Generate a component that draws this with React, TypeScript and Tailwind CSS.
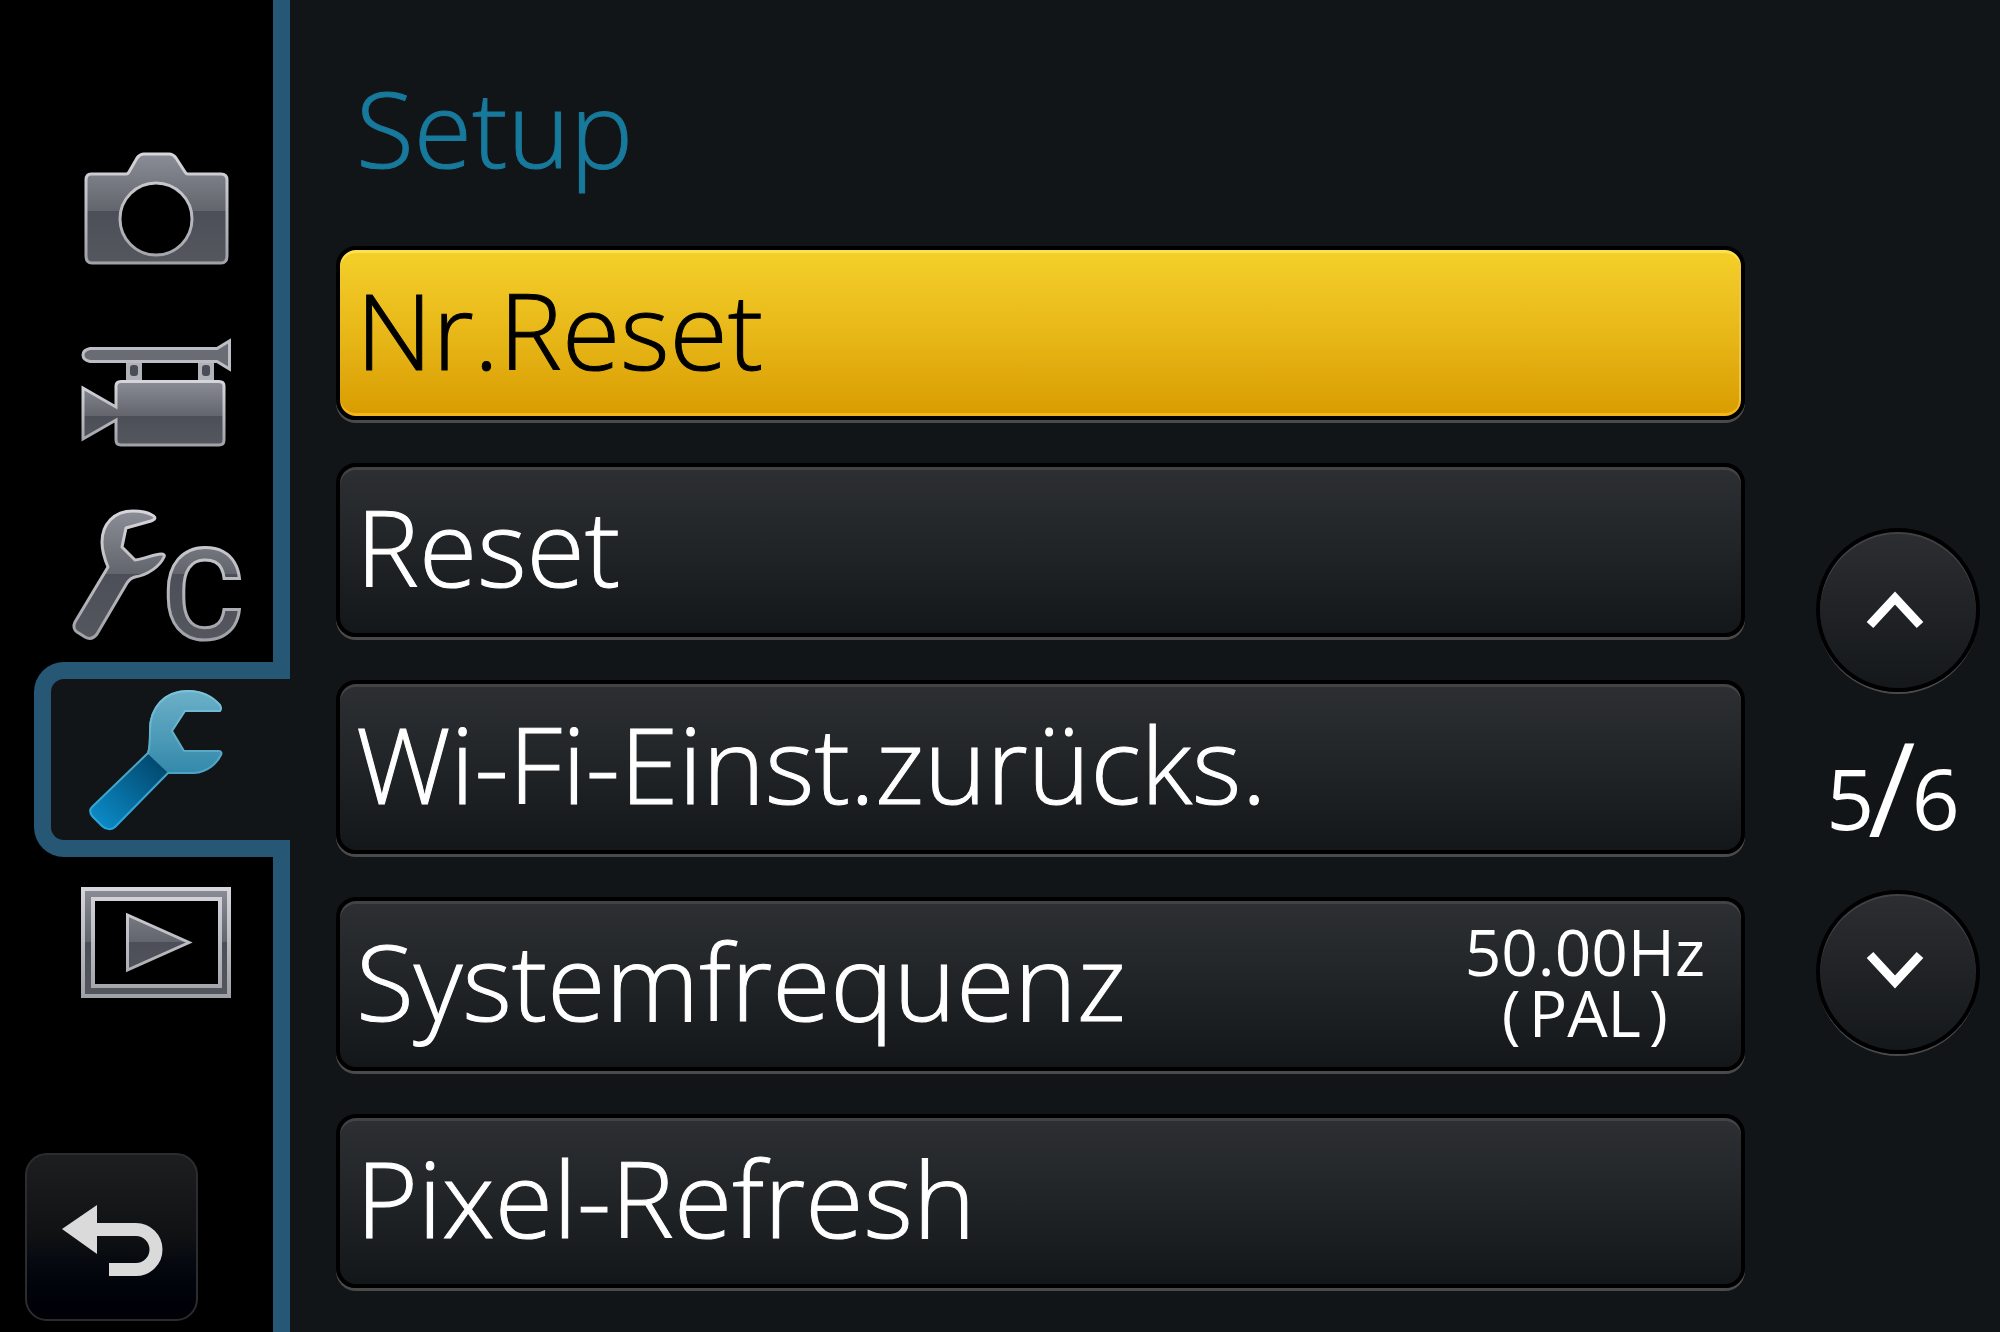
import type { ReactNode } from "react";

type Item = { label: string; value?: string; standard?: string };

const items: Item[] = [
  { label: "Nr.Reset" },
  { label: "Reset" },
  { label: "Wi-Fi-Einst.zurücks." },
  { label: "Systemfrequenz", value: "50.00Hz", standard: "PAL" },
  { label: "Pixel-Refresh" },
];

function SteelDefs({ id, top, split, bottom }: { id: string; top: number; split: number; bottom: number }) {
  const at = (split - top) / (bottom - top);
  return (
    <defs>
      <linearGradient id={`${id}-fill`} gradientUnits="userSpaceOnUse" x1="0" y1={top} x2="0" y2={bottom}>
        <stop offset="0" stopColor="#8c8e97" />
        <stop offset={at} stopColor="#63656d" />
        <stop offset={at} stopColor="#4c4f57" />
        <stop offset="1" stopColor="#54575e" />
      </linearGradient>
      <linearGradient id={`${id}-edge`} gradientUnits="userSpaceOnUse" x1="0" y1={top} x2="0" y2={bottom}>
        <stop offset="0" stopColor="#d6d6dc" />
        <stop offset="1" stopColor="#a0a1a8" />
      </linearGradient>
    </defs>
  );
}

function CameraIcon() {
  return (
    <svg className="h-[120px] w-[176px]" viewBox="72 148 176 120" aria-hidden="true">
      <SteelDefs id="cam" top={153} split={211} bottom={264} />
      <path
        fill="url(#cam-fill)"
        stroke="url(#cam-edge)"
        strokeWidth="3"
        fillRule="evenodd"
        d="M91 174H126Q128 174 129 172L137 158Q140 154 144 154H169Q173 154 176 158L185 172Q186 174 188 174H221Q227 174 227 180V256Q227 263 221 263H92Q86 263 86 256V180Q86 174 91 174ZM156 183A36 36 0 1 0 156 255A36 36 0 1 0 156 183Z"
      />
    </svg>
  );
}

function VideoIcon() {
  return (
    <svg className="h-[120px] w-[176px]" viewBox="72 333 176 120" aria-hidden="true">
      <SteelDefs id="vid" top={381} split={417} bottom={447} />
      <g fill="#b0b2ba">
        <path d="M126 364H142V384H126Z" />
        <path d="M198 364H214V384H198Z" />
      </g>
      <g fill="#4a4d55">
        <rect x="130" y="366" width="8" height="11" rx="3" />
        <rect x="202" y="366" width="8" height="11" rx="3" />
      </g>
      <path
        fill="#6a6c74"
        stroke="#bcbdc5"
        strokeWidth="3"
        d="M90 349.500H217L229.500 342V370L217 362.500H90Q83 361 83 356Q83 351 90 349.500Z"
      />
      <path
        fill="url(#vid-fill)"
        stroke="url(#vid-edge)"
        strokeWidth="3"
        d="M121 382.500H219Q224 382.500 224 387V441Q224 446 219 446H121Q116 446 116 441V421L83 440V389L116 408V387Q116 382.500 121 382.500Z"
      />
    </svg>
  );
}

function CustomIcon() {
  return (
    <svg className="h-[140px] w-[180px] overflow-visible" viewBox="72 503 180 140" aria-hidden="true">
      <SteelDefs id="wrc" top={510} split={574} bottom={640} />
      <path
        fill="url(#wrc-fill)"
        stroke="url(#wrc-edge)"
        strokeWidth="3"
        strokeLinejoin="round"
        d="M135 560L122 547L126 528L151 521C156 519 156 517 152 515C147 512 140 511 133 511C114 511 102 524 102 542C102 552 105 560 108 567L75 622C73 626 74 630 77 632L85 637C90 640 94 638 97 634L127 583C129 580 131 578 135 577C148 575 160 566 164 557C165 555 164 554 161 554C154 554 145 559 135 560Z"
      />
      <text
        x="162"
        y="639"
        fontSize="126"
        fontWeight="500"
        fontFamily="Roboto, sans-serif"
        fill="url(#wrc-fill)"
        stroke="url(#wrc-edge)"
        strokeWidth="3"
      >
        C
      </text>
    </svg>
  );
}

function SetupIcon() {
  return (
    <svg className="h-[150px] w-[176px]" viewBox="72 685 176 150" aria-hidden="true">
      <defs>
        <linearGradient id="set-head" gradientUnits="userSpaceOnUse" x1="0" y1="690" x2="0" y2="773">
          <stop offset="0" stopColor="#6cb0c8" />
          <stop offset="1" stopColor="#3489ab" />
        </linearGradient>
        <linearGradient id="set-grip" gradientUnits="userSpaceOnUse" x1="158" y1="763" x2="100" y2="822">
          <stop offset="0" stopColor="#024a70" />
          <stop offset="1" stopColor="#0b88c4" />
        </linearGradient>
        <linearGradient id="set-edge" gradientUnits="userSpaceOnUse" x1="0" y1="690" x2="0" y2="829">
          <stop offset="0" stopColor="#7cc4da" />
          <stop offset="0.550" stopColor="#4fa3c2" />
          <stop offset="1" stopColor="#25a5dc" />
        </linearGradient>
      </defs>
      <path fill="url(#set-grip)" d="M148 753L92 807C89 810 90 813 92 816L102 826C106 830 112 830 115 827L168 773Z" />
      <path
        fill="url(#set-head)"
        d="M184 751L172 731L185 711H220C222 709 221 707 220 705C212 696 202 690 188 690C164 690 149 708 149 730C149 740 149 748 147 753L168 773H194C208 772 217 763 221 755C222 753 221 751 219 751Z"
      />
      <path
        fill="none"
        stroke="url(#set-edge)"
        strokeWidth="2"
        strokeLinejoin="round"
        d="M184 751L172 731L185 711H220C222 709 221 707 220 705C212 696 202 691 188 691C164 691 150 708 150 730C150 740 150 748 148 753L92 807C89 810 90 813 92 816L102 826C106 830 112 830 115 827L168 773H194C208 772 217 763 221 755C222 753 221 751 219 751Z"
      />
    </svg>
  );
}

function PlaybackIcon() {
  return (
    <svg className="h-[120px] w-[176px]" viewBox="72 882 176 120" aria-hidden="true">
      <SteelDefs id="play" top={887} split={942} bottom={998} />
      <g fill="url(#play-fill)" stroke="url(#play-edge)" strokeWidth="4">
        <path fillRule="evenodd" d="M83 889H229V996H83ZM93 899H220V986H93Z" />
        <path strokeWidth="3" d="M127.500 915V970L189 942.500Z" />
      </g>
    </svg>
  );
}

function NavCell({ label, height, children }: { label: string; height: string; children: ReactNode }) {
  return (
    <button
      type="button"
      aria-label={label}
      className={`flex w-full items-center border-r-[17px] border-[#265875] pl-[72px] ${height}`}
    >
      {children}
    </button>
  );
}

function RoundButton({ label, points }: { label: string; points: string }) {
  return (
    <button
      type="button"
      aria-label={label}
      className="size-[164px] rounded-full border-4 border-black bg-linear-to-b from-[#2c2e32] to-[#15181a] shadow-[0_3px_0_-1px_#4a4a4b,inset_0_2px_0_#424245]"
    >
      <svg className="size-full" viewBox="4 4 156 156" fill="none" stroke="#fff" strokeWidth="9" aria-hidden="true">
        <polyline points={points} />
      </svg>
    </button>
  );
}

export default function App() {
  return (
    <div className="flex min-h-screen bg-[#121518] font-['Open_Sans',sans-serif] text-white">
      <aside className="flex w-[290px] shrink-0 flex-col bg-black">
        <nav className="flex flex-col">
          <div className="h-[116px] border-r-[17px] border-[#265875]" />
          <NavCell label="Foto" height="h-[184px]">
            <CameraIcon />
          </NavCell>
          <NavCell label="Video" height="h-[184px]">
            <VideoIcon />
          </NavCell>
          <NavCell label="Individual" height="h-[178px]">
            <CustomIcon />
          </NavCell>
          <button
            type="button"
            aria-label="Setup"
            aria-current="page"
            className="ml-[34px] flex h-[195px] items-center rounded-l-[30px] border-y-[17px] border-l-[17px] border-[#265875] bg-[#121518] pl-[21px]"
          >
            <SetupIcon />
          </button>
          <NavCell label="Wiedergabe" height="h-[170px]">
            <PlaybackIcon />
          </NavCell>
        </nav>
        <div className="flex flex-1 items-end border-r-[17px] border-[#265875] pb-[11px] pl-[25px]">
          <button
            type="button"
            aria-label="Zurück"
            className="h-[168px] w-[173px] rounded-[22px] border-2 border-[#2c2c2e] bg-linear-to-b from-[#1d1e20] via-[#0f1113] to-[#000006]"
          >
            <svg className="size-full" viewBox="27 1155 169 164" aria-hidden="true">
              <path fill="#dadada" d="M62 1229L97 1205V1254Z" />
              <path fill="none" stroke="#dadada" strokeWidth="13" d="M94 1229.500H136A20 20 0 0 1 136 1269.500H109" />
            </svg>
          </button>
        </div>
      </aside>

      <main className="flex min-w-0 flex-1 pl-[46px]">
        <section className="min-w-0 flex-1">
          <h1 className="flex h-[246px] items-center pt-2 pl-5 text-[106px] leading-none font-light text-[#17799b] [-webkit-text-stroke:1px]">
            Setup
          </h1>
          <ul className="flex flex-col gap-[43px] pb-[40px]">
            {items.map((item, i) => (
              <li key={item.label}>
                <button
                  type="button"
                  className={
                    i === 0
                      ? "flex h-[174px] w-full items-center justify-between rounded-[20px] border-4 border-black bg-linear-to-b from-[#f4d02a] via-[#e6b516] via-55% to-[#d99c00] pr-9 pl-4 text-black shadow-[0_3px_0_#4a4a4b,inset_0_3px_0_#fbe050,inset_0_-3px_0_#f3b41c,inset_-2px_0_0_#f0c440]"
                      : "flex h-[174px] w-full items-center justify-between rounded-[20px] border-4 border-black bg-linear-to-b from-[#2d2f33] via-[#202427] to-[#14171a] pr-9 pl-4 shadow-[0_3px_0_#4a4a4b,inset_0_3px_0_#434346]"
                  }
                >
                  <span className="pb-2 text-[106px] leading-none font-light [-webkit-text-stroke:1px]">
                    {item.label}
                  </span>
                  {item.value && (
                    <span className="flex flex-col pb-1 text-center text-[64px] leading-[61px]">
                      <span>{item.value}</span>
                      <span>
                        (<span className="mx-2">{item.standard}</span>)
                      </span>
                    </span>
                  )}
                </button>
              </li>
            ))}
          </ul>
        </section>
        <div className="flex w-[255px] shrink-0 flex-col pt-[528px] pl-[71px]">
          <RoundButton label="Vorherige Seite" points="54,97 79,70 104,97" />
          <p className="flex h-[198px] w-[154px] items-baseline justify-center pt-3 text-[84px] leading-[170px] font-medium">
            5<span className="-mx-1.5 font-[Roboto,sans-serif] text-[120px] font-normal">/</span>6
          </p>
          <RoundButton label="Nächste Seite" points="54,65 79,92 104,65" />
        </div>
      </main>
    </div>
  );
}
